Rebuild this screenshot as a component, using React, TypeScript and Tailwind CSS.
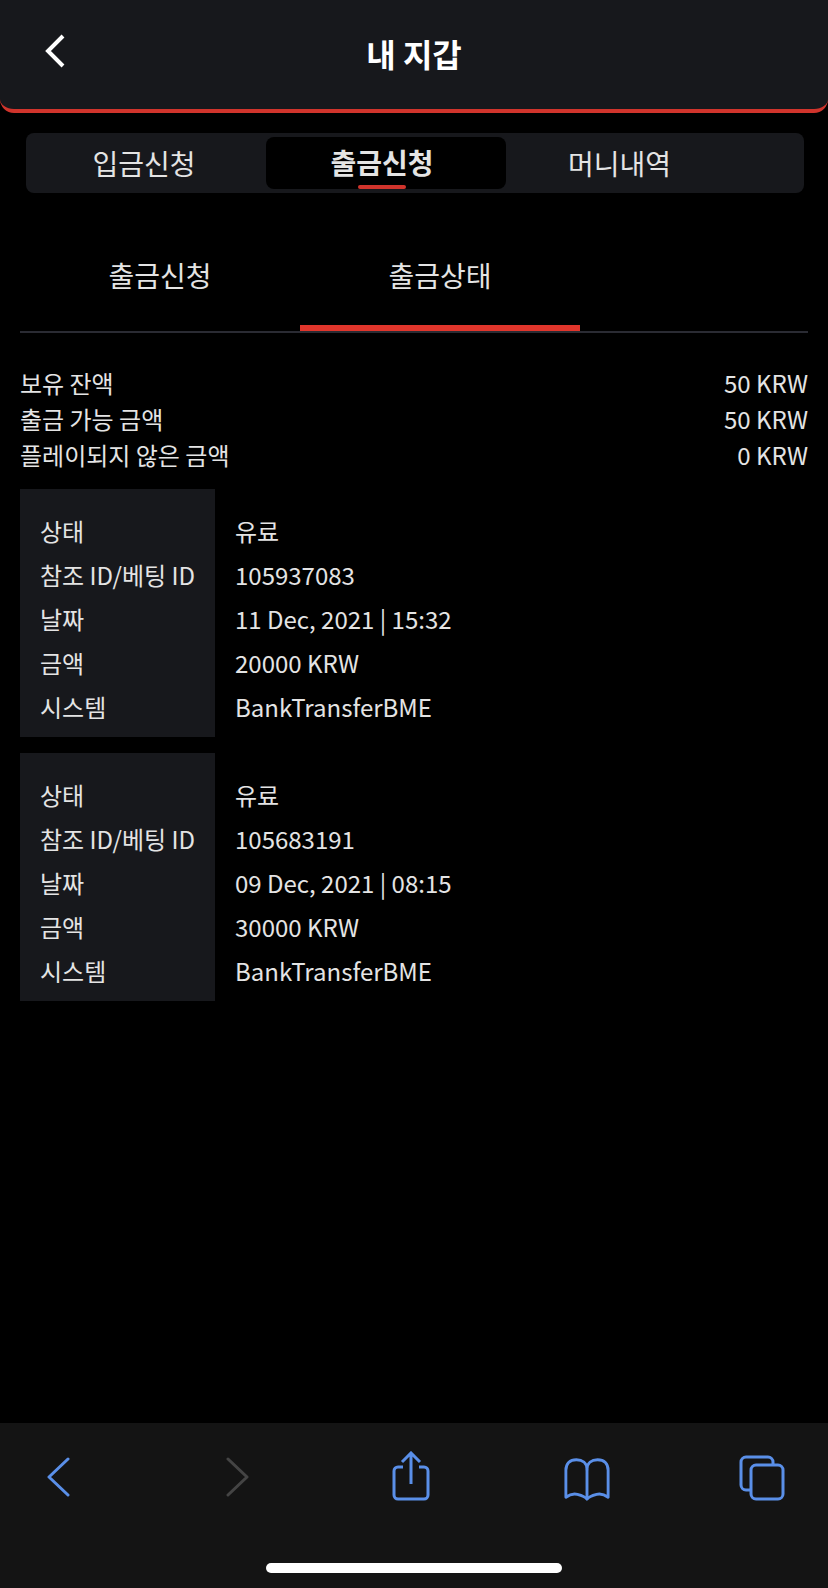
const records = [
  { id: "105937083", date: "11 Dec, 2021 | 15:32", amount: "20000 KRW" },
  { id: "105683191", date: "09 Dec, 2021 | 08:15", amount: "30000 KRW" },
];

const balances = [
  ["보유 잔액", "50 KRW"],
  ["출금 가능 금액", "50 KRW"],
  ["플레이되지 않은 금액", "0 KRW"],
];

function RecordTable({ id, date, amount }: { id: string; date: string; amount: string }) {
  const rows = [
    ["상태", "유료"],
    ["참조 ID/베팅 ID", id],
    ["날짜", date],
    ["금액", amount],
    ["시스템", "BankTransferBME"],
  ];

  return (
    <div className="flex">
      <div className="w-[195px] bg-[#17181c] pl-[20px] pt-[20px] pb-[8px]">
        {rows.map((r) => (
          <div key={r[0]} className="h-[44px] leading-[44px] whitespace-nowrap">
            {r[0]}
          </div>
        ))}
      </div>
      <div className="pl-[20px] pt-[20px] pb-[8px]">
        {rows.map((r) => (
          <div key={r[0]} className="h-[44px] leading-[44px] whitespace-nowrap">
            {r[1]}
          </div>
        ))}
      </div>
    </div>
  );
}

export default function App() {
  return (
    <div className="w-[828px] h-[1588px] flex flex-col bg-black text-[#e4e4e4] text-[24px] font-['Noto_Sans_CJK_KR','Noto_Sans',sans-serif]">
      {/* Header */}
      <div className="h-[113px] shrink-0 flex items-start bg-[#17181c] rounded-b-[14px] border-b-4 border-[#d0342c]">
        <div className="w-[100px] pl-[43px] pt-[33px]">
          <svg width="24" height="36" viewBox="0 0 24 36" fill="none" stroke="white" strokeWidth="4" strokeLinecap="butt" strokeLinejoin="miter">
            <path d="M20 3 5 18l15 15" />
          </svg>
        </div>
        <h1 className="flex-1 text-center text-white text-[32px] font-bold leading-[40px] pt-[33px]">내 지갑</h1>
        <div className="w-[100px]" />
      </div>

      {/* Top tabs */}
      <div className="ml-[26px] mr-[24px] mt-[20px] h-[60px] shrink-0 flex items-center bg-[#17181c] rounded-lg">
        <div className="w-[236px] text-center text-[28px]">입금신청</div>
        <div className="relative ml-[4px] w-[240px] h-[52px] pr-[8px] bg-black rounded-lg text-center text-[28px] font-bold leading-[50px]">
          출금신청
          <span className="absolute left-[92px] bottom-0 w-[48px] h-[4px] rounded-full bg-[#d0342c]" />
        </div>
        <div className="w-[227px] text-center text-[28px]">머니내역</div>
      </div>

      {/* Sub tabs */}
      <div className="mx-[20px] mt-[32px] h-[108px] shrink-0 flex border-b-2 border-[#2a2b33]">
        <div className="w-[280px] text-center text-[28px] leading-[100px]">출금신청</div>
        <div className="w-[280px] h-[106px] text-center text-[28px] leading-[100px] border-b-[6px] border-[#e0352b]">
          출금상태
        </div>
      </div>

      {/* Balances */}
      <div className="mx-[20px] mt-[32px] shrink-0">
        {balances.map((b) => (
          <div key={b[0]} className="h-[36px] leading-[36px] flex justify-between">
            <span>{b[0]}</span>
            <span>{b[1]}</span>
          </div>
        ))}
      </div>

      {/* Records */}
      <div className="mx-[20px] mt-[16px] flex flex-col gap-[16px]">
        {records.map((r) => (
          <RecordTable key={r.id} {...r} />
        ))}
      </div>

      {/* Browser toolbar */}
      <div className="mt-auto h-[165px] shrink-0 flex flex-col bg-[#141414]">
        <div className="flex items-start pt-[28px] h-[140px] text-[#5a8fe8]">
          <svg className="ml-[46px] mt-[6px] shrink-0" width="26" height="40" viewBox="0 0 26 40" fill="none" stroke="currentColor" strokeWidth="3" strokeLinecap="round" strokeLinejoin="round">
            <path d="M22 2 3 20l19 18" />
          </svg>
          <svg className="ml-[152px] mt-[6px] shrink-0 text-[#444444]" width="26" height="40" viewBox="0 0 26 40" fill="none" stroke="currentColor" strokeWidth="3" strokeLinecap="round" strokeLinejoin="round">
            <path d="M4 2l19 18L4 38" />
          </svg>
          <svg className="ml-[142px] shrink-0" width="38" height="50" viewBox="0 0 38 50" fill="none" stroke="currentColor" strokeWidth="3">
            <path d="M11 16H6a4 4 0 0 0-4 4v24a4 4 0 0 0 4 4h26a4 4 0 0 0 4-4V20a4 4 0 0 0-4-4h-5" />
            <path d="M19 33V2M10 11l9-9 9 9" />
          </svg>
          <svg className="ml-[133px] mt-[6px] shrink-0" width="48" height="44" viewBox="0 0 50 44" fill="none" stroke="currentColor" strokeWidth="3" strokeLinejoin="round">
            <path d="M25 12C25 5 20 2 14 2 7 2 3 6 3 13v28c4-3 8-4 12-3 4 1 8 2 10 5 2-3 6-4 10-5 4-1 8 0 12 3V13c0-7-4-11-11-11-6 0-11 3-11 10Z" />
            <path d="M25 12v31" />
          </svg>
          <svg className="ml-[128px] mt-[4px] shrink-0" width="46" height="46" viewBox="0 0 46 46" fill="none" stroke="currentColor" strokeWidth="3">
            <path d="M12 35H7a5 5 0 0 1-5-5V7a5 5 0 0 1 5-5h22a5 5 0 0 1 5 5v3" />
            <rect x="12" y="10" width="32" height="34" rx="5" />
          </svg>
        </div>
        <div className="h-[10px] w-[296px] ml-[266px] rounded-full bg-white" />
      </div>
    </div>
  );
}
